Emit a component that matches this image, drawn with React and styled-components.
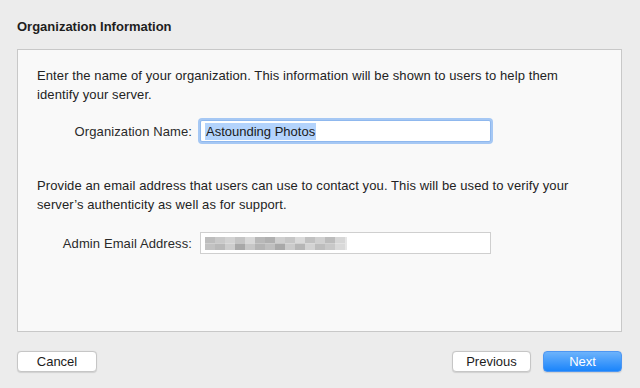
import React from 'react';
import styled, { createGlobalStyle } from 'styled-components';

const GlobalStyle = createGlobalStyle`
  html, body {
    margin: 0;
    padding: 0;
    background: #ececec;
  }
  body {
    font-family: "Liberation Sans", Arial, sans-serif;
    font-size: 13px;
    color: #222;
  }
`;

const Window = styled.div`
  width: 640px;
  height: 388px;
  box-sizing: border-box;
  padding: 19px 18px 0 17px;
  display: flex;
  flex-direction: column;
`;

const Title = styled.div`
  font-weight: bold;
  font-size: 13px;
  line-height: 16px;
  color: #1e1e1e;
  margin-bottom: 14px;
`;

const Panel = styled.div`
  height: 283px;
  box-sizing: border-box;
  border: 1px solid #c8c8c8;
  background: #f9f9f9;
  padding: 17px 18px 0 19px;
`;

const Paragraph = styled.p`
  margin: 0;
  line-height: 18.5px;
  letter-spacing: 0.1px;
  color: #232323;
  margin-bottom: ${(p) => p.$after}px;
`;

const FieldRow = styled.div`
  display: grid;
  grid-template-columns: 155px 291px;
  column-gap: 8px;
  align-items: center;
  margin-bottom: ${(p) => p.$after || 0}px;
`;

const Label = styled.label`
  text-align: right;
  color: #2a2a2a;
  letter-spacing: 0.1px;
`;

const Input = styled.div`
  height: 22px;
  box-sizing: border-box;
  background: #fff;
  border: 1px solid ${(p) => (p.$focused ? '#8fb8ee' : '#cfcfcf')};
  box-shadow: ${(p) => (p.$focused ? '0 0 0 2px #a6c8f4' : 'none')};
  border-radius: ${(p) => (p.$focused ? '2px' : '0')};
  display: flex;
  align-items: center;
  padding-left: 4px;
`;

const Selected = styled.span`
  background: #b3d3fc;
  color: #1a1a1a;
  line-height: 17px;
  padding: 0 1px;
`;

const Footer = styled.div`
  display: flex;
  align-items: center;
  margin-top: 19px;
`;

const Spacer = styled.div`
  flex: 1;
`;

const Button = styled.button`
  width: ${(p) => p.$width || 79}px;
  height: 21px;
  margin-left: ${(p) => p.$gap || 0}px;
  box-sizing: border-box;
  font-family: "Liberation Sans", Arial, sans-serif;
  font-size: 13px;
  border-radius: 4px;
  padding: 0;
  cursor: pointer;
  border: 1px solid ${(p) => (p.$primary ? '#4d96f2' : '#c6c6c6')};
  color: ${(p) => (p.$primary ? '#fff' : '#1c1c1c')};
  background: ${(p) =>
    p.$primary ? 'linear-gradient(#6db3fb, #1a84fb)' : '#fff'};
  box-shadow: 0 0.5px 1px rgba(0, 0, 0, 0.12);
`;

const blur = [
  ['#bdbdbd', '#c9c9c9', '#d2d2d2', '#c4c4c4', '#d8d8d8', '#b8b8b8', '#b0b0b0', '#cfcfcf', '#c6c6c6', '#dadada', '#c1c1c1', '#d0d0d0', '#bcbcbc', '#d6d6d6'],
  ['#c2c2c2', '#b9b9b9', '#cdcdcd', '#a8a8a8', '#c7c7c7', '#b4b4b4', '#bfbfbf', '#a9a9a9', '#cbcbcb', '#b6b6b6', '#d3d3d3', '#bdbdbd', '#c8c8c8', '#d9d9d9'],
];

function BlurredText() {
  return (
    <svg width="142" height="13" viewBox="0 0 142 13">
      {blur.map((row, r) =>
        row.map((c, i) => (
          <rect key={`${r}-${i}`} x={i * 10} y={r * 6.5} width="10" height="6.5" fill={c} />
        ))
      )}
      <rect x="140" y="0" width="2" height="13" fill="#e6e6e6" />
    </svg>
  );
}

export default function App() {
  return (
    <>
      <GlobalStyle />
      <Window>
        <Title>Organization Information</Title>
        <Panel>
          <Paragraph $after={16}>
            Enter the name of your organization. This information will be shown to users to help them
            <br />
            identify your server.
          </Paragraph>
          <FieldRow $after={35}>
            <Label>Organization Name:</Label>
            <Input $focused>
              <Selected>Astounding Photos</Selected>
            </Input>
          </FieldRow>
          <Paragraph $after={18}>
            Provide an email address that users can use to contact you. This will be used to verify your
            <br />
            server’s authenticity as well as for support.
          </Paragraph>
          <FieldRow>
            <Label>Admin Email Address:</Label>
            <Input>
              <BlurredText />
            </Input>
          </FieldRow>
        </Panel>
        <Footer>
          <Button $width={80}>Cancel</Button>
          <Spacer />
          <Button>Previous</Button>
          <Button $primary $gap={12}>Next</Button>
        </Footer>
      </Window>
    </>
  );
}
